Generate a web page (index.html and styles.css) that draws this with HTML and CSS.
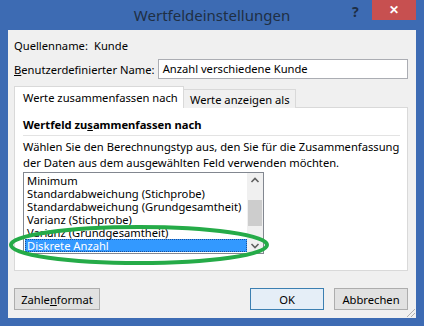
FILE: index.html
```html
<!DOCTYPE html>
<html lang="de">
<head>
  <meta charset="UTF-8">
  <title>Wertfeldeinstellungen</title>
  <link rel="stylesheet" href="styles.css">
</head>
<body>
  <div class="dialog">
    <div class="titlebar">
      <span class="title">Wertfeldeinstellungen</span>
      <span class="help">?</span>
      <span class="close">&#x2715;</span>
    </div>
    <div class="client">
      <div class="row row-source">
        <span class="lbl-source">Quellenname:</span>
        <span>Kunde</span>
      </div>
      <div class="row row-name">
        <span class="lbl-name"><u>B</u>enutzerdefinierter Name:</span>
        <div class="input">Anzahl verschiedene Kunde</div>
      </div>
      <div class="tabs">
        <div class="tab tab-active">Werte zusammenfassen nach</div>
        <div class="tab">Werte anzeigen als</div>
      </div>
      <div class="panel">
        <div class="panel-head">Wertfeld zu<u>s</u>ammenfassen nach</div>
        <p class="hint">Wählen Sie den Berechnungstyp aus, den Sie für die Zusammenfassung<br>der Daten aus dem ausgewählten Feld verwenden möchten.</p>
        <div class="listwrap">
          <div class="listbox">
            <ul class="items">
              <li>Minimum</li>
              <li>Standardabweichung (Stichprobe)</li>
              <li>Standardabweichung (Grundgesamtheit)</li>
              <li>Varianz (Stichprobe)</li>
              <li>Varianz (Grundgesamtheit)</li>
              <li class="selected">Diskrete Anzahl</li>
            </ul>
            <div class="scrollbar">
              <svg class="arrow" width="16" height="14" viewBox="0 0 16 14"><path d="M4.5 9 L8 5.5 L11.5 9" fill="none" stroke="#606060" stroke-width="1.6"/></svg>
              <div class="track"><div class="thumb"></div></div>
              <svg class="arrow" width="16" height="14" viewBox="0 0 16 14"><path d="M4.5 5 L8 8.5 L11.5 5" fill="none" stroke="#606060" stroke-width="1.6"/></svg>
            </div>
          </div>
          <!-- markierung -->
          <svg class="circle" width="266" height="44" viewBox="0 0 266 44"><ellipse cx="132" cy="21" rx="128" ry="18" fill="none" stroke="#25ab48" stroke-width="4"/></svg>
        </div>
      </div>
      <div class="buttons">
        <button class="btn">Zahle<u>n</u>format</button>
        <span class="spacer"></span>
        <button class="btn btn-default">OK</button>
        <button class="btn">Abbrechen</button>
      </div>
      <span class="grip"></span>
    </div>
  </div>
</body>
</html>
```

FILE: styles.css
```css
body{
  margin: 0;
  font-family: "Noto Sans", "Open Sans", sans-serif;
  font-size: 11.2px;
  color: #000;
}
.dialog{
  width: 424px;
  height: 326px;
  background: #3d6bb3;
  display: flex;
  flex-direction: column;
  white-space: nowrap;
}
.titlebar{
  height: 30px;
  position: relative;
  display: flex;
  justify-content: center;
}
.title{
  font-size: 15px;
  line-height: 30px;
  color: #1f2f44;
}
.help{
  position: absolute;
  left: 352px;
  top: 2px;
  font-weight: bold;
  font-size: 14px;
  color: #1d2e45;
}
.close{
  position: absolute;
  right: 8px;
  top: 0;
  width: 44px;
  height: 20px;
  background: #c75050;
  color: #fff;
  font-size: 12px;
  font-weight: bold;
  line-height: 20px;
  text-align: center;
}
.client{
  margin: 0 8px 8px 8px;
  flex: 1;
  background: #f0f0f0;
  padding: 0 8px 0 6px;
  position: relative;
}
.row{
  display: flex;
  align-items: center;
}
.row-source{
  height: 16px;
  margin-top: 7px;
}
.lbl-source{
  width: 80px;
}
.row-name{
  margin-top: 6px;
}
.lbl-name{
  width: 144px;
}
.input{
  width: 245px;
  height: 18px;
  border: 1px solid #abadb3;
  background: #fff;
  padding-left: 4px;
  line-height: 18px;
}
.tabs{
  display: flex;
  align-items: flex-end;
  margin-top: 8px;
  height: 21px;
  position: relative;
  z-index: 1;
}
.tab{
  border: 1px solid #d9d9d9;
  border-bottom: none;
  background: #f0f0f0;
  height: 18px;
  line-height: 19px;
  padding: 0 6px;
}
.tab-active{
  background: #fff;
  height: 21px;
  line-height: 22px;
  width: 160px;
  padding: 0 0 0 8px;
}
.tab + .tab{
  border-left: none;
  width: 99px;
}
.panel{
  margin-top: -1px;
  height: 162px;
  border: 1px solid #d9d9d9;
  background: #fff;
  padding: 0 7px 0 8px;
}
.panel-head{
  font-weight: bold;
  margin-top: 9px;
  line-height: 16px;
  padding-bottom: 2px;
  border-bottom: 1px solid #e3e3e3;
}
.hint{
  margin: 3px 0 0 0;
  line-height: 16px;
}
.listwrap{
  position: relative;
  margin-top: 1px;
  width: 241px;
}
.listbox{
  border: 1px solid #828790;
  display: flex;
  height: 80px;
  overflow: hidden;
}
.items{
  list-style: none;
  margin: 0;
  padding: 1px 0 0 1px;
  flex: 1;
}
.items li{
  line-height: 13px;
  height: 13px;
  padding-left: 2px;
}
.items .selected{
  background: #3399ff;
  color: #fff;
  outline: 1px dotted #1a4f99;
  outline-offset: -1px;
}
.scrollbar{
  width: 16px;
  background: #f0f0f0;
  display: flex;
  flex-direction: column;
}
.track{
  flex: 1;
  padding-top: 13px;
}
.thumb{
  height: 26px;
  background: #cdcdcd;
  margin: 0 1px;
}
.circle{
  position: absolute;
  left: -16px;
  top: 52px;
}
.buttons{
  display: flex;
  margin-top: 17px;
  gap: 10px;
}
.spacer{
  flex: 1;
}
.btn{
  font: inherit;
  height: 22px;
  border: 1px solid #adadad;
  background: #e1e1e1;
  padding: 0;
  width: 86px;
}
.btn-default{
  border-color: #3c7fb1;
  background: #e5eef7;
  width: 74px;
}
.btn-default + .btn{
  width: 74px;
}
.grip{
  position: absolute;
  right: 1px;
  bottom: 1px;
  width: 8px;
  height: 8px;
  background: linear-gradient(135deg, transparent 45%, #b0b0b0 45%, #b0b0b0 55%, transparent 55%, transparent 70%, #b0b0b0 70%, #b0b0b0 80%, transparent 80%);
}
```
